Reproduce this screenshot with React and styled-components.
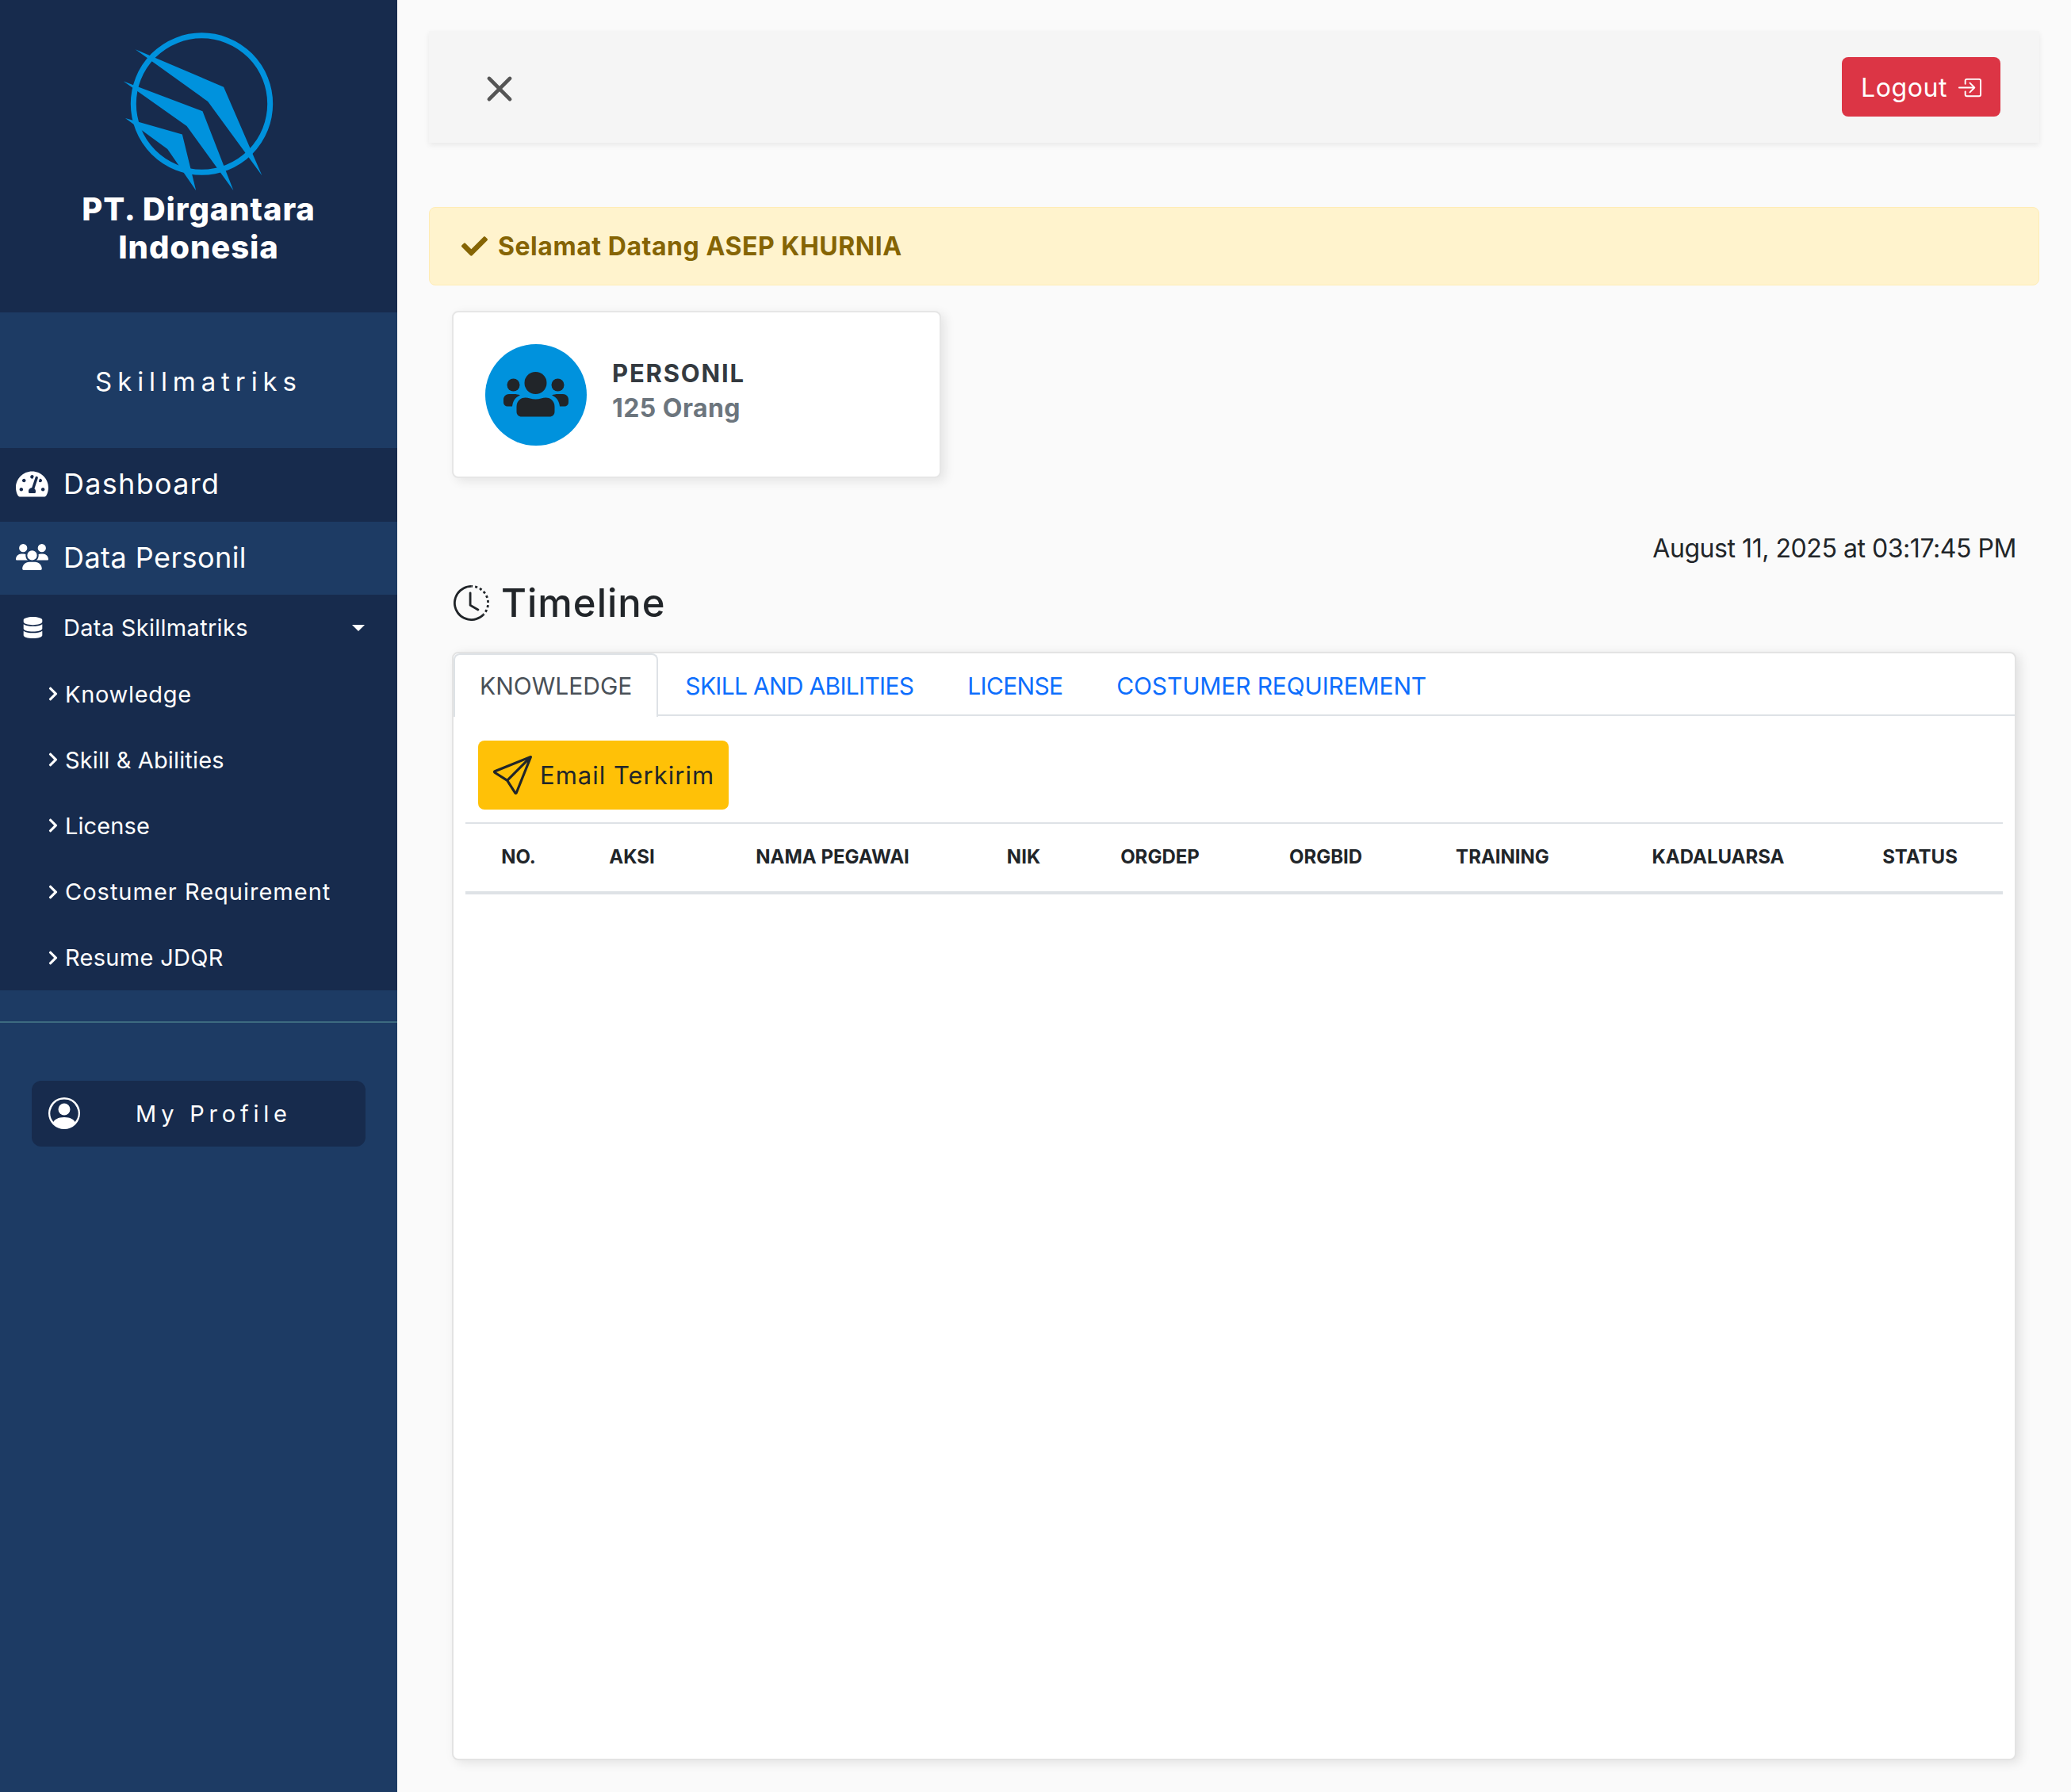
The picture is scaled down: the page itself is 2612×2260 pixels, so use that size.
import React from "react";
import styled, { createGlobalStyle } from "styled-components";
import { FaCheck, FaDatabase, FaTachometerAlt, FaChevronRight } from "react-icons/fa";
import { FaUsers } from "react-icons/fa6";
import {
  BsBoxArrowInRight,
  BsClockHistory,
  BsPersonCircle,
  BsSend,
  BsXLg,
} from "react-icons/bs";

const GlobalStyle = createGlobalStyle`
  * { box-sizing: border-box; }
  html, body { margin: 0; padding: 0; }
  body {
    background: #fafafa;
    color: #212529;
    font-family: "Inter", "Open Sans", sans-serif;
  }
`;

const Layout = styled.div`
  display: flex;
  min-height: 2260px;
`;

const Sidebar = styled.aside`
  width: 501px;
  flex-shrink: 0;
  background: #1d3b64;
  color: #fff;
`;

const Brand = styled.div`
  height: 394px;
  padding-top: 38px;
  background: #172b4d;
  display: flex;
  flex-direction: column;
  align-items: center;
`;

const BrandName = styled.div`
  width: 340px;
  margin-top: -3px;
  font-size: 40px;
  font-weight: 800;
  line-height: 48px;
  letter-spacing: 0.9px;
  text-align: center;
`;

const AppName = styled.div`
  height: 171px;
  padding-top: 2px;
  display: flex;
  align-items: center;
  justify-content: center;
  font-size: 33px;
  letter-spacing: 6.9px;
`;

const NavRow = styled.div`
  height: 92.5px;
  padding: 0 0 2px 20px;
  display: flex;
  align-items: center;
  gap: 19px;
  font-size: 36px;
  letter-spacing: ${(p) => p.$spacing}px;
  background: ${(p) => (p.$active ? "#1d3b64" : "#172b4d")};
  svg { font-size: 41px; flex-shrink: 0; }
`;

const NavGroup = styled.div`
  background: #172b4d;
`;

const GroupRow = styled.div`
  height: 83px;
  display: flex;
  align-items: center;
  padding: 0 41px 0 28px;
  gap: 25px;
  font-size: 29px;
  letter-spacing: 0.3px;
  svg { font-size: 27px; flex-shrink: 0; }
`;

const Caret = styled.span`
  margin-left: auto;
  width: 0;
  height: 0;
  border-left: 8px solid transparent;
  border-right: 8px solid transparent;
  border-top: 8px solid #fff;
`;

const SubRow = styled.div`
  height: 83.2px;
  padding: 1px 0 0 57px;
  display: flex;
  align-items: center;
  gap: 5px;
  font-size: 29px;
  letter-spacing: ${(p) => p.$spacing}px;
  svg { font-size: 20px; flex-shrink: 0; }
`;

const Divider = styled.hr`
  margin: 39px 0 73px;
  border: 0;
  border-top: 2px solid #3d6a80;
`;

const ProfileButton = styled.div`
  height: 83px;
  margin: 0 40px;
  padding-left: 21px;
  display: flex;
  align-items: center;
  background: #172b4d;
  border-radius: 12px;
  font-size: 29px;
  letter-spacing: 5.8px;
  svg { font-size: 40px; flex-shrink: 0; }
  span { margin-left: 70px; }
`;

const Main = styled.main`
  flex: 1;
  min-width: 0;
  padding: 39px 40px 40px;
  display: flex;
  flex-direction: column;
`;

const TopBar = styled.header`
  height: 141px;
  padding: 0 49px 0 70px;
  display: flex;
  align-items: center;
  justify-content: space-between;
  background: #f5f5f5;
  box-shadow: 0 3px 7px rgba(0, 0, 0, 0.07);
  svg.close {
    margin-top: 4px;
    font-size: 38px;
    color: #555;
    stroke: currentColor;
    stroke-width: 1;
  }
`;

const LogoutButton = styled.button`
  width: 200px;
  height: 75px;
  padding: 2px 0 0;
  display: flex;
  align-items: center;
  justify-content: center;
  gap: 12px;
  border: 0;
  border-radius: 8px;
  background: #dc3545;
  color: #fff;
  font-family: inherit;
  font-size: 32px;
  letter-spacing: 0.6px;
  svg { font-size: 31px; }
`;

const Alert = styled.div`
  height: 99px;
  margin-top: 81px;
  padding-left: 40px;
  display: flex;
  align-items: center;
  gap: 13px;
  background: #fff3cd;
  border: 1px solid #ffecb5;
  border-radius: 8px;
  color: #856404;
  font-size: 32px;
  font-weight: 700;
  letter-spacing: 0.55px;
  svg { font-size: 33px; }
`;

const Content = styled.div`
  flex: 1;
  padding: 0 29px;
  display: flex;
  flex-direction: column;
`;

const StatCard = styled.section`
  width: 617px;
  height: 211px;
  margin-top: 32px;
  padding-left: 40px;
  display: flex;
  align-items: center;
  gap: 32px;
  background: #fff;
  border: 2px solid #e6e6e6;
  border-radius: 8px;
  box-shadow: 5px 4px 14px rgba(0, 0, 0, 0.09);
`;

const StatIcon = styled.div`
  width: 128px;
  height: 128px;
  border-radius: 50%;
  background: #0092dd;
  display: flex;
  align-items: center;
  justify-content: center;
`;

const StatText = styled.div`
  padding-bottom: 9px;
`;

const StatLabel = styled.div`
  font-size: 31px;
  font-weight: 700;
  line-height: 44px;
  letter-spacing: 1.8px;
  color: #343a40;
`;

const StatValue = styled.div`
  font-size: 32px;
  font-weight: 700;
  line-height: 44px;
  letter-spacing: 0.45px;
  color: #6c757d;
`;

const DateLine = styled.div`
  margin-top: 66px;
  text-align: right;
  font-size: 32px;
  line-height: 46px;
  letter-spacing: -0.45px;
`;

const Heading = styled.h2`
  margin: 18px 0 0;
  height: 54px;
  display: flex;
  align-items: center;
  gap: 15px;
  font-size: 49px;
  font-weight: 500;
  letter-spacing: 1px;
  svg { font-size: 45px; margin-left: 2px; }
`;

const TabCard = styled.section`
  flex: 1;
  margin-top: 35px;
  background: #fff;
  border: 2px solid #e3e3e3;
  border-radius: 8px;
  box-shadow: 5px 3px 14px rgba(0, 0, 0, 0.1);
`;

const TabBar = styled.nav`
  height: 79px;
  display: flex;
  border-bottom: 2px solid #dee2e6;
`;

const Tab = styled.div`
  height: 80px;
  padding: 0 ${(p) => (p.$active ? "31px" : "32px")};
  display: flex;
  align-items: center;
  font-size: 30px;
  letter-spacing: ${(p) => p.$spacing}px;
  color: ${(p) => (p.$active ? "#495057" : "#0d6efd")};
  background: ${(p) => (p.$active ? "#fff" : "transparent")};
  border: 2px solid ${(p) => (p.$active ? "#dee2e6" : "transparent")};
  border-bottom: 0;
  border-radius: 8px 8px 0 0;
`;

const TabBody = styled.div`
  padding: 31px 15px 0;
`;

const EmailButton = styled.button`
  width: 316px;
  height: 87px;
  margin-left: 16px;
  display: flex;
  align-items: center;
  gap: 10px;
  padding: 0 0 0 18px;
  border: 0;
  border-radius: 8px;
  background: #ffc107;
  color: #212529;
  font-family: inherit;
  font-size: 31px;
  letter-spacing: 1px;
  svg { font-size: 50px; flex-shrink: 0; }
`;

const Table = styled.table`
  width: 100%;
  margin-top: 16px;
  border-collapse: collapse;
  table-layout: fixed;
  th {
    height: 88px;
    padding: 0 0 3px;
    border-top: 2px solid #dee2e6;
    border-bottom: 4px solid #dee2e6;
    font-size: 24px;
    font-weight: 700;
    text-align: center;
  }
`;

const personilColumns = [
  ["NO.", 134],
  ["AKSI", 152],
  ["NAMA PEGAWAI", 354],
  ["NIK", 128],
  ["ORGDEP", 216],
  ["ORGBID", 202],
  ["TRAINING", 244],
  ["KADALUARSA", 300],
  ["STATUS", 209],
];

const subItems = [
  ["Knowledge", 0.7],
  ["Skill & Abilities", 0.15],
  ["License", 0.1],
  ["Costumer Requirement", 1],
  ["Resume JDQR", 0.3],
];

const tabs = [
  ["SKILL AND ABILITIES", -0.7],
  ["LICENSE", -0.7],
  ["COSTUMER REQUIREMENT", -0.15],
];

const Logo = () => (
  <svg width="193" height="205" viewBox="460 115 580 615" fill="#0092dd">
    <circle cx="762" cy="394" r="259" fill="none" stroke="#0092dd" strokeWidth="21" />
    <polygon points="510,187 845,330 990,665 785,385" />
    <polygon points="465,308 765,422 882,722 705,478" />
    <polygon points="472,448 688,510 740,722 632,565" />
  </svg>
);

const SideBody = ({ flip }) => (
  <path
    d="M15 57v-3c0-4 3-7 7-7h6c3 0 6 .5 8 1.5c-5 2-9 6-10 14h-6c-3 0-5-2-5-5.5z"
    transform={flip ? "translate(112 0) scale(-1 1)" : undefined}
  />
);

const PeopleIcon = () => (
  <svg width="82" height="57" viewBox="15 19 82 57" fill="#212529">
    <circle cx="55.5" cy="33" r="14" />
    <circle cx="27.5" cy="35.5" r="8" />
    <circle cx="83.5" cy="35.5" r="8" />
    <path d="M38 75.5c-4 0-6.5-2.5-6.5-6.5v-6c0-7 5-11.5 11-11.5c4 0 8 2 13 2s9-2 13-2c6 0 11 4.5 11 11.5v6c0 4-2.5 6.5-6.5 6.5z" />
    <SideBody />
    <SideBody flip />
  </svg>
);

export default function App() {
  return (
    <>
      <GlobalStyle />
      <Layout>
        <Sidebar>
          <Brand>
            <Logo />
            <BrandName>PT. Dirgantara Indonesia</BrandName>
          </Brand>
          <AppName>Skillmatriks</AppName>
          <NavRow $spacing={1.3}>
            <FaTachometerAlt />
            Dashboard
          </NavRow>
          <NavRow $active $spacing={0.45}>
            <FaUsers />
            Data Personil
          </NavRow>
          <NavGroup>
            <GroupRow>
              <FaDatabase />
              Data Skillmatriks
              <Caret />
            </GroupRow>
            {subItems.map(([item, spacing]) => (
              <SubRow key={item} $spacing={spacing}>
                <FaChevronRight />
                {item}
              </SubRow>
            ))}
          </NavGroup>
          <Divider />
          <ProfileButton>
            <BsPersonCircle />
            <span>My Profile</span>
          </ProfileButton>
        </Sidebar>
        <Main>
          <TopBar>
            <BsXLg className="close" />
            <LogoutButton>
              Logout
              <BsBoxArrowInRight />
            </LogoutButton>
          </TopBar>
          <Alert>
            <FaCheck />
            Selamat Datang ASEP KHURNIA
          </Alert>
          <Content>
            <StatCard>
              <StatIcon>
                <PeopleIcon />
              </StatIcon>
              <StatText>
                <StatLabel>PERSONIL</StatLabel>
                <StatValue>125 Orang</StatValue>
              </StatText>
            </StatCard>
            <DateLine>August 11, 2025 at 03:17:45 PM</DateLine>
            <Heading>
              <BsClockHistory />
              Timeline
            </Heading>
            <TabCard>
              <TabBar>
                <Tab $active $spacing={0}>
                  KNOWLEDGE
                </Tab>
                {tabs.map(([tab, spacing]) => (
                  <Tab key={tab} $spacing={spacing}>
                    {tab}
                  </Tab>
                ))}
              </TabBar>
              <TabBody>
                <EmailButton>
                  <BsSend />
                  Email Terkirim
                </EmailButton>
                <Table>
                  <colgroup>
                    {personilColumns.map(([name, width]) => (
                      <col key={name} width={width} />
                    ))}
                  </colgroup>
                  <thead>
                    <tr>
                      {personilColumns.map(([name]) => (
                        <th key={name}>{name}</th>
                      ))}
                    </tr>
                  </thead>
                </Table>
              </TabBody>
            </TabCard>
          </Content>
        </Main>
      </Layout>
    </>
  );
}
